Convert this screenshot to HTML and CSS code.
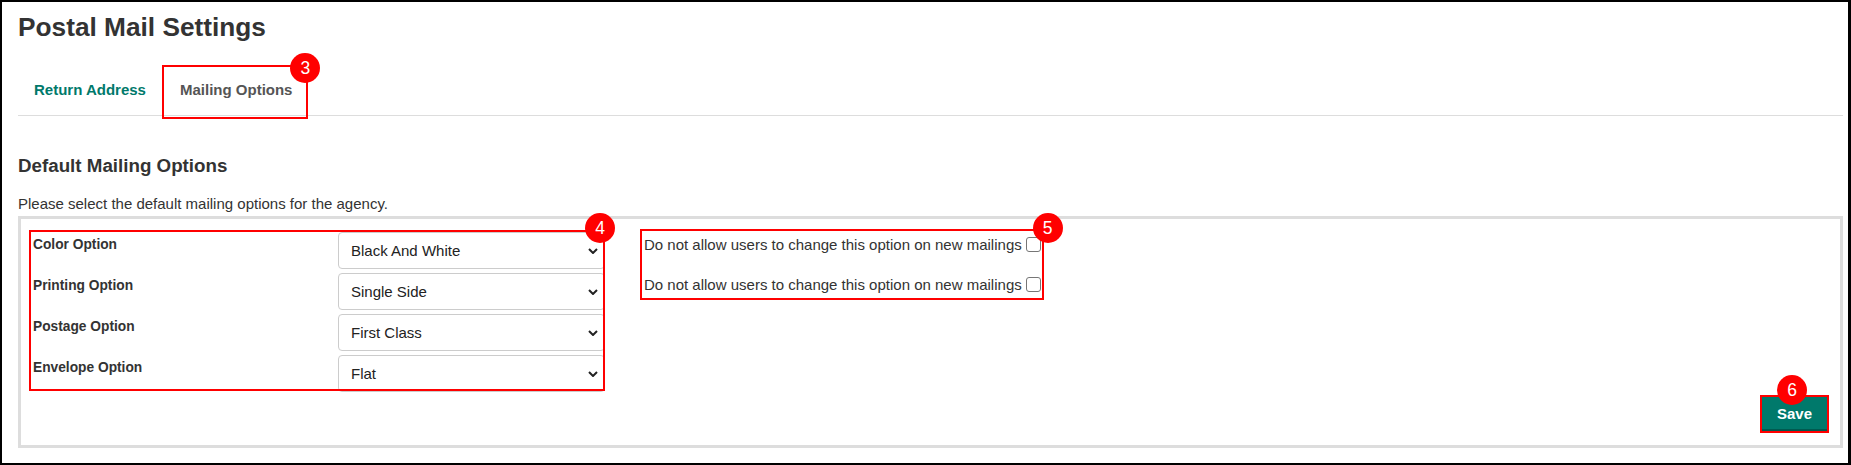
FILE: index.html
```html
<!DOCTYPE html>
<html lang="en">
<head>
    <meta charset="UTF-8">
    <meta name="viewport" content="width=device-width, initial-scale=1.0">
    <title>Postal Mail Settings</title>
    <link rel="stylesheet" href="styles.css">
</head>
<body>

    <div class="page">
        <h1 class="page-title">Postal Mail Settings</h1>

        <!-- Tabs -->
        <ul class="tabs">
            <li><a href="#" class="tab">Return Address</a></li>
            <li><a href="#" class="tab tab-active">Mailing Options<span class="badge">3</span></a></li>
        </ul>

        <!-- Mailing Options -->
        <section class="mailing">
            <h2>Default Mailing Options</h2>
            <p class="intro">Please select the default mailing options for the agency.</p>

            <div class="panel">
                <div class="panel-row">
                    <div class="options">
                        <span class="badge">4</span>
                        <div class="option-row">
                            <label for="colorOption">Color Option</label>
                            <div class="select-wrap">
                                <select id="colorOption">
                                    <option>Black And White</option>
                                    <option>Color</option>
                                </select>
                                <svg class="chevron" width="10" height="6" viewBox="0 0 10 6"><path d="M1 1l4 4 4-4"/></svg>
                            </div>
                        </div>
                        <div class="option-row">
                            <label for="printingOption">Printing Option</label>
                            <div class="select-wrap">
                                <select id="printingOption">
                                    <option>Single Side</option>
                                    <option>Double Side</option>
                                </select>
                                <svg class="chevron" width="10" height="6" viewBox="0 0 10 6"><path d="M1 1l4 4 4-4"/></svg>
                            </div>
                        </div>
                        <div class="option-row">
                            <label for="postageOption">Postage Option</label>
                            <div class="select-wrap">
                                <select id="postageOption">
                                    <option>First Class</option>
                                    <option>Standard</option>
                                </select>
                                <svg class="chevron" width="10" height="6" viewBox="0 0 10 6"><path d="M1 1l4 4 4-4"/></svg>
                            </div>
                        </div>
                        <div class="option-row">
                            <label for="envelopeOption">Envelope Option</label>
                            <div class="select-wrap">
                                <select id="envelopeOption">
                                    <option>Flat</option>
                                    <option>Standard</option>
                                </select>
                                <svg class="chevron" width="10" height="6" viewBox="0 0 10 6"><path d="M1 1l4 4 4-4"/></svg>
                            </div>
                        </div>
                    </div>

                    <div class="locks">
                        <span class="badge">5</span>
                        <label class="lock">Do not allow users to change this option on new mailings <input type="checkbox"></label>
                        <label class="lock">Do not allow users to change this option on new mailings <input type="checkbox"></label>
                    </div>
                </div>

                <div class="panel-footer">
                    <button type="button" class="btn-save">Save<span class="badge">6</span></button>
                </div>
            </div>
        </section>
    </div>

</body>
</html>
```

FILE: styles.css
```css
/* General Styles */
html, body {
    margin: 0;
    height: 100%;
}

body {
    font-family: 'Liberation Sans', Arial, sans-serif;
    color: #333;
    background-color: #fff;
}

.page {
    box-sizing: border-box;
    height: 100vh;
    border: 2px solid #000;
    border-right-width: 3px;
    padding: 10px 5px 0 16px;
}

.page-title {
    margin: 0;
    font-size: 26.25px;
    line-height: 30px;
    font-weight: 700;
    color: #333;
}

/* Tabs */
.tabs {
    list-style: none;
    margin: 23px 0 0;
    padding: 0;
    display: flex;
    align-items: flex-start;
    border-bottom: 1px solid #ddd;
}

.tab {
    position: relative;
    display: block;
    box-sizing: border-box;
    height: 54px;
    margin-bottom: -4px;
    padding: 16px 16px 0;
    font-size: 15px;
    line-height: 18px;
    font-weight: 700;
    color: #00796b;
    text-decoration: none;
}

.tab-active {
    padding-left: 18px;
    color: #555;
    outline: 2px solid #f00; /* callout */
    outline-offset: -2px;
}

.tab-active .badge {
    right: -12px;
    top: -12px;
}

/* Callout badges */
.badge {
    position: absolute;
    width: 30px;
    height: 30px;
    border-radius: 50%;
    background-color: #f00;
    color: #fff;
    font-size: 17.5px;
    font-weight: 400;
    line-height: 30px;
    text-align: center;
}

/* Mailing Options */
.mailing h2 {
    margin: 38.5px 0 0;
    font-size: 18.75px;
    line-height: 22px;
    font-weight: 700;
}

.intro {
    margin: 18.5px 0 3px;
    font-size: 15px;
    line-height: 18px;
}

.panel {
    border: 3px solid #ddd;
    padding: 13px 13px 14px 10px;
}

.panel-row {
    display: flex;
    align-items: flex-start;
}

.options {
    position: relative;
    width: 572px;
    height: 157px;
    outline: 2px solid #f00;
}

.options .badge {
    right: -12px;
    top: -19px;
}

.option-row {
    display: grid;
    grid-template-columns: 307px 267px;
    margin-bottom: 4px;
}

.option-row label {
    padding: 3px 0 0 2px;
    font-size: 13.75px;
    line-height: 20px;
    font-weight: 700;
    color: #333;
}

.select-wrap {
    display: grid;
}

.select-wrap select,
.select-wrap .chevron {
    grid-area: 1 / 1;
}

.select-wrap select {
    appearance: none;
    -webkit-appearance: none;
    height: 37px;
    width: 100%;
    margin: 0;
    padding: 0 30px 0 12px;
    border: 1px solid #ccc;
    border-radius: 4px;
    background-color: #fff;
    font-family: inherit;
    font-size: 15px;
    color: #222;
}

.chevron {
    justify-self: end;
    align-self: center;
    margin-right: 7px;
    pointer-events: none;
}

.chevron path {
    fill: none;
    stroke: #222;
    stroke-width: 2;
}

.locks {
    position: relative;
    margin: -1px 0 0 39px;
    padding: 0 1px 1px 2px;
    outline: 2px solid #f00;
}

.locks .badge {
    right: -21px;
    top: -18px;
}

.lock {
    display: flex;
    align-items: center;
    gap: 4px;
    height: 26px;
    font-size: 15px;
    color: #333;
}

.lock + .lock {
    margin-top: 14px;
}

.lock input[type="checkbox"] {
    appearance: none;
    -webkit-appearance: none;
    width: 15px;
    height: 15px;
    margin: 0;
    border: 1px solid #767676;
    border-radius: 3px;
    background: #fff;
}

.panel-footer {
    display: flex;
    justify-content: flex-end;
    margin-top: 8px;
}

.btn-save {
    position: relative;
    width: 65px;
    height: 34px;
    padding: 0;
    border: none;
    border-bottom: 2px solid #005a50;
    background-color: #00796b;
    color: #fff;
    font-family: inherit;
    font-size: 15px;
    font-weight: 700;
    cursor: pointer;
    outline: 2px solid #f00;
}

.btn-save .badge {
    left: 15px;
    top: -22px;
}
```
